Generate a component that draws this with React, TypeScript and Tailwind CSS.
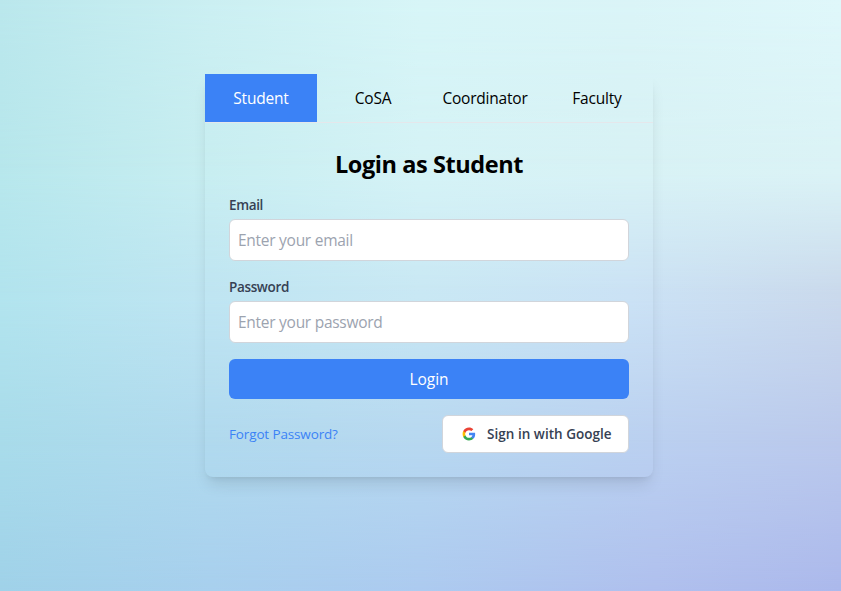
const tabs = ["Student", "CoSA", "Coordinator", "Faculty"];

function Backdrop() {
  return (
    <div className="[grid-area:1/1] grid" aria-hidden="true">
      <div className="[grid-area:1/1] bg-[linear-gradient(to_right,#a0d2e9_0%,#a8d0ee_25%,#adcbf0_50%,#b0c0ee_78%,#acb9ec_100%)]" />
      <div className="[grid-area:1/1] bg-[linear-gradient(to_right,#a8dbea_0%,#b0d9ee_25%,#b6d7f0_50%,#bacff0_78%,#bac8ec_100%)] [mask-image:linear-gradient(to_bottom,black_76%,transparent_100%)]" />
      <div className="[grid-area:1/1] bg-[linear-gradient(to_right,#b2e4ee_0%,#bfe5f2_25%,#c9e8f4_50%,#cbe2f5_75%,#cad9ec_100%)] [mask-image:linear-gradient(to_bottom,black_50%,transparent_76%)]" />
      <div className="[grid-area:1/1] bg-[linear-gradient(to_right,#b7e7ec_0%,#c8eef1_25%,#d5f3f6_50%,#d8f2f5_75%,#dbf3f6_100%)] [mask-image:linear-gradient(to_bottom,black_29%,transparent_50%)]" />
      <div className="[grid-area:1/1] bg-[linear-gradient(to_right,#bae7ec_0%,#cbeff2_25%,#d7f5f7_50%,#daf4f7_75%,#dff7fa_100%)] [mask-image:linear-gradient(to_bottom,black_0%,transparent_29%)]" />
    </div>
  );
}

function GoogleIcon() {
  return (
    <svg viewBox="0 0 24 24" className="mr-[11px] size-[14px] shrink-0" aria-hidden="true">
      <path fill="#4285F4" d="M22.56 12.25c0-.78-.07-1.53-.2-2.25H12v4.26h5.92c-.26 1.37-1.04 2.53-2.21 3.31v2.77h3.57c2.08-1.92 3.28-4.74 3.28-8.09z" />
      <path fill="#34A853" d="M12 23c2.97 0 5.46-.98 7.28-2.66l-3.57-2.77c-.98.66-2.23 1.06-3.71 1.06-2.86 0-5.29-1.93-6.16-4.53H2.18v2.84C3.99 20.53 7.7 23 12 23z" />
      <path fill="#FBBC05" d="M5.84 14.09c-.22-.66-.35-1.36-.35-2.09s.13-1.43.35-2.09V7.07H2.18C1.43 8.55 1 10.22 1 12s.43 3.45 1.18 4.93l3.66-2.84z" />
      <path fill="#EA4335" d="M12 5.38c1.62 0 3.06.56 4.21 1.64l3.15-3.15C17.45 2.09 14.97 1 12 1 7.7 1 3.99 3.47 2.18 7.07l3.66 2.84c.87-2.6 3.3-4.53 6.16-4.53z" />
    </svg>
  );
}

function Field({ label, type, placeholder }: { label: string; type: string; placeholder: string }) {
  return (
    <label className="mb-4 block">
      <span className="block text-[13.5px] leading-5 font-semibold tracking-[-0.35px] text-gray-700">{label}</span>
      <input
        type={type}
        placeholder={placeholder}
        className="mt-1 block h-[42px] w-full rounded-md border border-[#d1d5db] bg-white px-2 text-[15.5px] tracking-[-0.27px] placeholder:text-[#9ca3af]"
      />
    </label>
  );
}

export default function App() {
  return (
    <div className="grid h-screen overflow-hidden font-['Open_Sans','Noto_Sans',sans-serif]">
      <Backdrop />
      <main className="z-10 [grid-area:1/1] flex justify-center pt-[74px] pl-[17px]">
        <div className="h-[403px] w-[448px] rounded-lg shadow-lg">
          <nav className="grid h-[49px] grid-cols-4 border-b border-[#e5e7eb]">
            {tabs.map((tab, i) => (
              <button
                key={tab}
                className={
                  i === 0
                    ? "bg-[#3b82f6] pt-[2px] text-[15.5px] tracking-[-0.2px] text-white"
                    : "pt-[2px] text-[15.5px] tracking-[-0.2px] text-black"
                }
              >
                {tab}
              </button>
            ))}
          </nav>
          <form className="px-6 pt-[25px]" onSubmit={(e) => e.preventDefault()}>
            <h2 className="mb-[15px] text-center text-[23.5px] leading-8 font-bold tracking-[-0.42px] text-black">Login as Student</h2>
            <Field label="Email" type="email" placeholder="Enter your email" />
            <Field label="Password" type="password" placeholder="Enter your password" />
            <button className="h-10 w-full rounded-md bg-[#3b82f6] pt-[2px] text-[15.5px] tracking-[0px] text-white">Login</button>
            <div className="mt-4 flex items-center justify-between">
              <a href="#" className="text-[13.5px] tracking-[-0.14px] text-[#3b82f6]">Forgot Password?</a>
              <button type="button" className="flex h-[38px] w-[187px] items-center rounded-md border border-[#d1d5db] bg-white pl-[19px] text-[13.5px] font-semibold whitespace-nowrap text-gray-700">
                <GoogleIcon />
                <span className="tracking-[0.03px]">Sign in with Google</span>
              </button>
            </div>
          </form>
        </div>
      </main>
    </div>
  );
}
